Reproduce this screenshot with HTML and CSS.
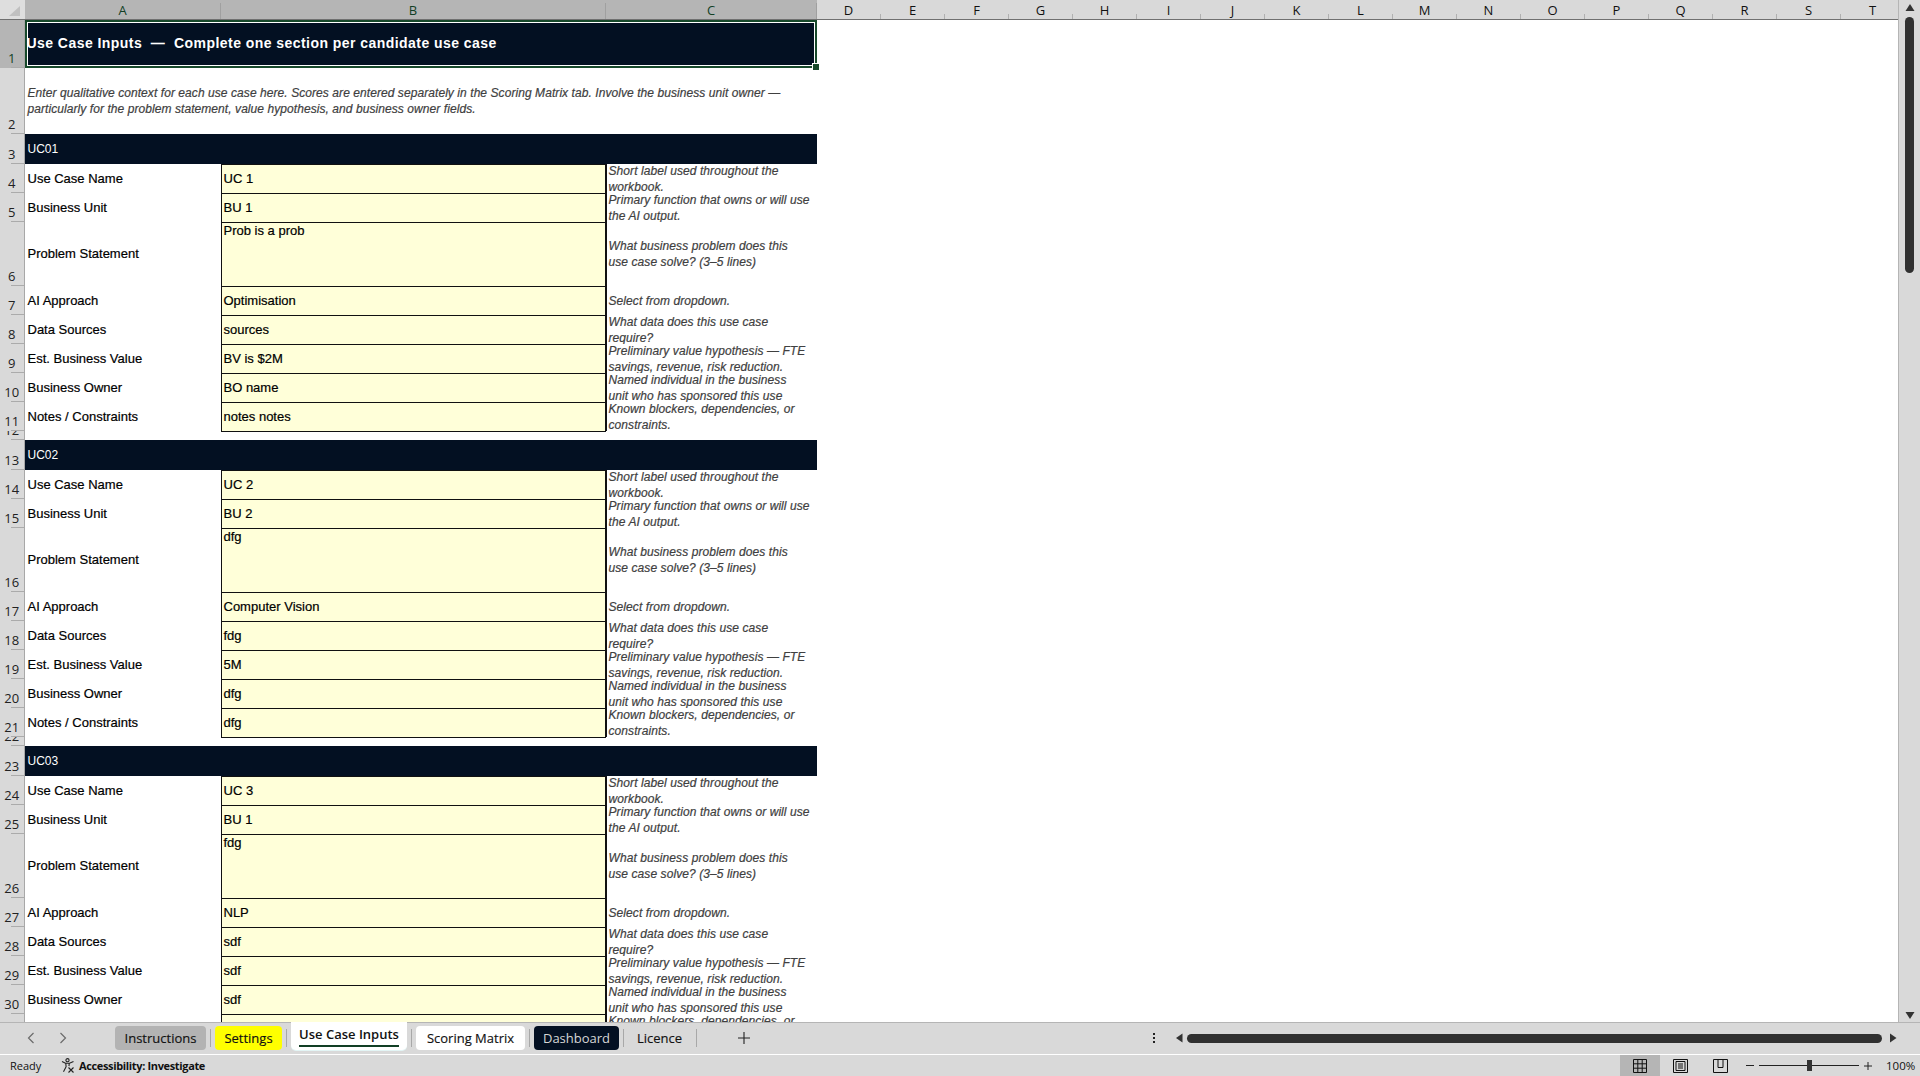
FILE: index.html
```html
<!DOCTYPE html>
<html lang="en">
<head>
    <meta charset="UTF-8">
    <title>Use Case Inputs</title>
    <link rel="stylesheet" href="styles.css">
</head>
<body>
<div class="app">

    <div class="workspace">
        <div class="sheet">
            <div class="col-heads">
                <div class="corner"><svg width="24" height="19" viewBox="0 0 24 19"><polygon points="20,6 20,16 9,16" fill="#c0c0c0"/></svg></div>
                <div class="col-head col-a sel">A</div>
                <div class="col-head col-b sel">B</div>
                <div class="col-head col-c sel">C</div>
                <div class="col-head">D</div>
                <div class="col-head">E</div>
                <div class="col-head">F</div>
                <div class="col-head">G</div>
                <div class="col-head">H</div>
                <div class="col-head">I</div>
                <div class="col-head">J</div>
                <div class="col-head">K</div>
                <div class="col-head">L</div>
                <div class="col-head">M</div>
                <div class="col-head">N</div>
                <div class="col-head">O</div>
                <div class="col-head">P</div>
                <div class="col-head">Q</div>
                <div class="col-head">R</div>
                <div class="col-head">S</div>
                <div class="col-head">T</div>
            </div>

            <div class="row row-title">
                <div class="row-head sel">1</div>
                <div class="merged title">Use Case Inputs &nbsp;—&nbsp; Complete one section per candidate use case<span class="fill-handle"></span></div>
            </div>
            <div class="row row-intro">
                <div class="row-head">2</div>
                <div class="merged intro">Enter qualitative context for each use case here. Scores are entered separately in the Scoring Matrix tab. Involve the business unit owner — particularly for the problem statement, value hypothesis, and business owner fields.</div>
            </div>

            <!-- UC01 -->
            <div class="row row-uc"><div class="row-head">3</div><div class="merged uc">UC01</div></div>
            <div class="row"><div class="row-head">4</div><div class="label">Use Case Name</div><div class="input">UC 1</div><div class="hint">Short label used throughout the workbook.</div></div>
            <div class="row"><div class="row-head">5</div><div class="label">Business Unit</div><div class="input">BU 1</div><div class="hint hint-wide">Primary function that owns or will use the AI output.</div></div>
            <div class="row row-tall"><div class="row-head">6</div><div class="label">Problem Statement</div><div class="input top">Prob is a prob</div><div class="hint">What business problem does this use case solve? (3–5 lines)</div></div>
            <div class="row"><div class="row-head">7</div><div class="label">AI Approach</div><div class="input">Optimisation</div><div class="hint">Select from dropdown.</div></div>
            <div class="row"><div class="row-head">8</div><div class="label">Data Sources</div><div class="input">sources</div><div class="hint">What data does this use case require?</div></div>
            <div class="row"><div class="row-head">9</div><div class="label">Est. Business Value</div><div class="input">BV is $2M</div><div class="hint">Preliminary value hypothesis — FTE savings, revenue, risk reduction.</div></div>
            <div class="row"><div class="row-head">10</div><div class="label">Business Owner</div><div class="input">BO name</div><div class="hint hint-long"><span>Named individual in the business unit who has sponsored this use case.</span></div></div>
            <div class="row"><div class="row-head">11</div><div class="label">Notes / Constraints</div><div class="input">notes notes</div><div class="hint">Known blockers, dependencies, or constraints.</div></div>
            <div class="row row-gap"><div class="row-head">12</div></div>

            <!-- UC02 -->
            <div class="row row-uc"><div class="row-head">13</div><div class="merged uc">UC02</div></div>
            <div class="row"><div class="row-head">14</div><div class="label">Use Case Name</div><div class="input">UC 2</div><div class="hint">Short label used throughout the workbook.</div></div>
            <div class="row"><div class="row-head">15</div><div class="label">Business Unit</div><div class="input">BU 2</div><div class="hint hint-wide">Primary function that owns or will use the AI output.</div></div>
            <div class="row row-tall"><div class="row-head">16</div><div class="label">Problem Statement</div><div class="input top">dfg</div><div class="hint">What business problem does this use case solve? (3–5 lines)</div></div>
            <div class="row"><div class="row-head">17</div><div class="label">AI Approach</div><div class="input">Computer Vision</div><div class="hint">Select from dropdown.</div></div>
            <div class="row"><div class="row-head">18</div><div class="label">Data Sources</div><div class="input">fdg</div><div class="hint">What data does this use case require?</div></div>
            <div class="row"><div class="row-head">19</div><div class="label">Est. Business Value</div><div class="input">5M</div><div class="hint">Preliminary value hypothesis — FTE savings, revenue, risk reduction.</div></div>
            <div class="row"><div class="row-head">20</div><div class="label">Business Owner</div><div class="input">dfg</div><div class="hint hint-long"><span>Named individual in the business unit who has sponsored this use case.</span></div></div>
            <div class="row"><div class="row-head">21</div><div class="label">Notes / Constraints</div><div class="input">dfg</div><div class="hint">Known blockers, dependencies, or constraints.</div></div>
            <div class="row row-gap"><div class="row-head">22</div></div>

            <!-- UC03 -->
            <div class="row row-uc"><div class="row-head">23</div><div class="merged uc">UC03</div></div>
            <div class="row"><div class="row-head">24</div><div class="label">Use Case Name</div><div class="input">UC 3</div><div class="hint">Short label used throughout the workbook.</div></div>
            <div class="row"><div class="row-head">25</div><div class="label">Business Unit</div><div class="input">BU 1</div><div class="hint hint-wide">Primary function that owns or will use the AI output.</div></div>
            <div class="row row-tall"><div class="row-head">26</div><div class="label">Problem Statement</div><div class="input top">fdg</div><div class="hint">What business problem does this use case solve? (3–5 lines)</div></div>
            <div class="row"><div class="row-head">27</div><div class="label">AI Approach</div><div class="input">NLP</div><div class="hint">Select from dropdown.</div></div>
            <div class="row"><div class="row-head">28</div><div class="label">Data Sources</div><div class="input">sdf</div><div class="hint">What data does this use case require?</div></div>
            <div class="row"><div class="row-head">29</div><div class="label">Est. Business Value</div><div class="input">sdf</div><div class="hint">Preliminary value hypothesis — FTE savings, revenue, risk reduction.</div></div>
            <div class="row"><div class="row-head">30</div><div class="label">Business Owner</div><div class="input">sdf</div><div class="hint hint-long"><span>Named individual in the business unit who has sponsored this use case.</span></div></div>
            <div class="row"><div class="row-head">31</div><div class="label">Notes / Constraints</div><div class="input">sdf</div><div class="hint">Known blockers, dependencies, or constraints.</div></div>
        </div>

        <div class="vscroll">
            <svg class="arrow" width="10" height="8" viewBox="0 0 10 8"><polygon points="5,0 9.5,7 0.5,7" fill="#333"/></svg>
            <div class="vthumb"></div>
            <svg class="arrow arrow-down" width="10" height="8" viewBox="0 0 10 8"><polygon points="0.5,1 9.5,1 5,8" fill="#333"/></svg>
        </div>
    </div>

    <div class="tabbar">
        <div class="tab-nav">
            <svg width="8" height="12" viewBox="0 0 8 12"><path d="M6.5 1 1.5 6l5 5" fill="none" stroke="#6b6b6b" stroke-width="1.2"/></svg>
            <svg width="8" height="12" viewBox="0 0 8 12"><path d="M1.5 1l5 5-5 5" fill="none" stroke="#6b6b6b" stroke-width="1.2"/></svg>
        </div>
        <div class="tabs">
            <div class="tab tab-grey">Instructions</div>
            <div class="tab-sep"></div>
            <div class="tab tab-yellow">Settings</div>
            <div class="tab-sep"></div>
            <div class="tab tab-active"><span>Use Case Inputs</span></div>
            <div class="tab-sep"></div>
            <div class="tab tab-white">Scoring Matrix</div>
            <div class="tab-sep"></div>
            <div class="tab tab-navy">Dashboard</div>
            <div class="tab-sep"></div>
            <div class="tab tab-plain">Licence</div>
            <div class="tab-sep"></div>
            <svg class="tab-add" width="12" height="12" viewBox="0 0 12 12"><path d="M6 0v12M0 6h12" stroke="#222" stroke-width="1.1"/></svg>
        </div>
        <div class="tab-dots"><i></i><i></i><i></i></div>
        <div class="hscroll">
            <svg width="8" height="10" viewBox="0 0 8 10"><polygon points="7.5,0.5 7.5,9.5 1,5" fill="#333"/></svg>
            <div class="hthumb"></div>
            <svg width="8" height="10" viewBox="0 0 8 10"><polygon points="1,0.5 7.5,5 1,9.5" fill="#333"/></svg>
        </div>
    </div>

    <div class="statusbar">
        <span class="ready">Ready</span>
        <svg class="a11y" width="14" height="15" viewBox="0 0 14 15" fill="none" stroke="#222" stroke-width="1.1">
            <circle cx="6.5" cy="2.2" r="1.6"/>
            <path d="M1 3.5l3.5 1.8h4L12.5 3.5M4.8 5.5l.3 3.2-2.6 5M8.2 5.5l-.2 2.6"/>
            <path d="M7.5 9.5l5 5M12.5 9.5l-5 5"/>
        </svg>
        <span class="a11y-text">Accessibility: Investigate</span>
        <div class="views">
            <div class="view view-on">
                <svg width="14" height="14" viewBox="0 0 14 14" fill="none" stroke="#111" stroke-width="1"><path d="M.5.5h13v13H.5zM.5 4.8h13M.5 9.2h13M4.8.5v13M9.2.5v13"/></svg>
            </div>
            <div class="view">
                <svg width="15" height="14" viewBox="0 0 15 14" fill="none" stroke="#111" stroke-width="1"><path d="M.5.5h14v13H.5zM3 2.5h9v9H3zM5 5h5M5 7h5M5 9h5"/></svg>
            </div>
            <div class="view">
                <svg width="15" height="14" viewBox="0 0 15 14" fill="none" stroke="#111" stroke-width="1"><path d="M.5.5h14v13H.5zM5 .5v8h5V.5"/></svg>
            </div>
        </div>
        <div class="zoom">
            <span class="zoom-minus"></span>
            <div class="slider"><span class="slider-knob"></span></div>
            <svg width="8" height="8" viewBox="0 0 8 8"><path d="M4 0v8M0 4h8" stroke="#222" stroke-width="1"/></svg>
            <span class="zoom-pct">100%</span>
        </div>
    </div>

</div>
</body>
</html>
```

FILE: styles.css
```css
* {
    box-sizing: border-box;
}

body {
    margin: 0;
    font-family: "Liberation Sans", Arial, sans-serif;
    background-color: #d9d9d9;
    overflow: hidden;
}

.app {
    display: flex;
    flex-direction: column;
    height: 100vh;
}

.workspace {
    display: flex;
    height: 1022px;
    flex: none;
}

.sheet {
    flex: 1;
    min-width: 0;
    overflow: hidden;
    background-color: white;
    border-right: 1px solid #b5b5b5;
}

/* column letters */
.col-heads {
    display: flex;
    height: 20px;
    background-color: #d9d9d9;
    border-bottom: 1px solid #707070;
    font-family: "Open Sans", sans-serif;
    font-size: 13px;
}

.corner {
    width: 24.5px;
    flex: none;
    background-color: #dedede;
}

.col-head {
    position: relative;
    width: 64px;
    flex: none;
    text-align: center;
    line-height: 20px;
    color: #111;
}

.col-head::after {
    content: "";
    position: absolute;
    right: 0;
    bottom: 0;
    height: 5px;
    width: 1px;
    background-color: #b0b0b0;
}

.col-head.sel {
    background-color: #b5b5b5;
    color: #123f25;
}

.col-head.sel::after {
    height: 16px;
    background-color: #a0a0a0;
}

.col-a { width: 196px; }
.col-b { width: 385px; }
.col-c { width: 211px; }

/* sheet rows */
.row {
    display: flex;
    height: 29px;
    font-size: 13px;
    color: black;
    -webkit-text-stroke: 0.2px;
}

.row-title { height: 47.5px; }
.row-intro { height: 66.5px; }
.row-uc { height: 29.5px; }
.row-tall { height: 64px; }
.row-gap { height: 9.7px; }

.row-head {
    position: relative;
    width: 24.5px;
    flex: none;
    display: flex;
    align-items: flex-end;
    justify-content: center;
    padding-bottom: 1px;
    background-color: #d9d9d9;
    border-right: 1px solid #a8a8a8;
    font-family: "Open Sans", sans-serif;
    font-size: 13px;
    line-height: 18px;
    color: #222;
    overflow: hidden;
    -webkit-text-stroke: 0;
}

.row-head::after {
    content: "";
    position: absolute;
    right: 0;
    bottom: 0;
    width: 13px;
    height: 1px;
    background-color: #ababab;
}

.row-head.sel {
    background-color: #b5b5b5;
    color: #123f25;
}

.merged {
    width: 792px;
    flex: none;
    padding-left: 3px;
    display: flex;
    align-items: center;
}

.title {
    position: relative;
    padding-bottom: 2px;
    padding-left: 0;
    background-color: #031022;
    color: white;
    font-size: 14px;
    font-weight: bold;
    letter-spacing: 0.45px;
    border: 2px solid #17492b;
    box-shadow: inset 0 0 0 1px white;
    -webkit-text-stroke: 0;
}

.fill-handle {
    position: absolute;
    right: -4px;
    bottom: -4px;
    width: 6px;
    height: 6px;
    margin: -1px;
    background-color: #17492b;
    border: 1px solid white;
    box-sizing: content-box;
}

.intro {
    font-size: 12px;
    font-style: italic;
    letter-spacing: 0.07px;
    line-height: 16px;
    color: #404040;
}

.uc {
    background-color: #031022;
    color: white;
    font-size: 12px;
    -webkit-text-stroke: 0;
}

.label {
    width: 196px;
    flex: none;
    padding-left: 3px;
    display: flex;
    align-items: center;
}

.input {
    position: relative;
    width: 385px;
    margin-bottom: -1px;
    flex: none;
    padding-left: 2px;
    display: flex;
    align-items: center;
    background-color: #ffffd9;
    border: 1px solid #111;
}

.input.top {
    align-items: flex-start;
}

.hint {
    width: 211px;
    flex: none;
    padding: 2px 9px 0 2px;
    display: flex;
    align-items: center;
    font-size: 12px;
    font-style: italic;
    letter-spacing: 0.08px;
    line-height: 16px;
    color: #404040;
    overflow: hidden;
    border-left: 1px solid #111;
}

.row-tall .hint {
    padding-top: 0;
}

.hint-wide {
    padding-right: 5px;
}

/* three lines in a two line row, only the first two show */
.hint-long {
    align-items: flex-start;
    padding-top: 0;
}

.hint-long span {
    margin-top: -1px;
}

/* scrollbars */
.vscroll {
    position: relative;
    width: 21px;
    flex: none;
    background-color: #d9d9d9;
}

.arrow {
    position: absolute;
    left: 6px;
    top: 4px;
}

.arrow-down {
    top: auto;
    bottom: 3px;
}

.vthumb {
    position: absolute;
    left: 6px;
    top: 17px;
    width: 9px;
    height: 256px;
    border-radius: 5px;
    background-color: #303030;
}

/* sheet tabs */
.tabbar {
    display: flex;
    align-items: flex-start;
    height: 32px;
    flex: none;
    background-color: #d9d9d9;
    border-top: 1px solid #b5b5b5;
    font-family: "Open Sans", sans-serif;
    font-size: 13px;
}

.tab-nav {
    width: 115px;
    flex: none;
    display: flex;
    gap: 24px;
    padding: 9px 0 0 27px;
}

.tabs {
    width: 1030px;
    flex: none;
    display: flex;
    align-items: flex-start;
}

.tab {
    height: 24px;
    margin-top: 3px;
    border-radius: 4px;
    display: flex;
    align-items: center;
    justify-content: center;
    color: #111;
    -webkit-text-stroke: 0.15px;
}

.tab-sep {
    width: 1px;
    height: 18px;
    margin: 6px 4px 0;
    background-color: #a8a8a8;
}

.tab-grey { width: 91px; background-color: #b3b3b3; }
.tab-yellow { width: 67px; background-color: #ffff00; }
.tab-white { width: 109px; background-color: white; }
.tab-navy { width: 85px; background-color: #031022; color: #d6d6d6; -webkit-text-stroke: 0; }

.tab-plain {
    width: 64px;
    padding-left: 9px;
    justify-content: flex-start;
}

.tab-active {
    width: 116px;
    height: 28px;
    margin-top: -1px;
    align-items: flex-start;
    background-color: white;
    border-radius: 0 0 5px 5px;
    font-weight: 600;
    box-shadow: 0 1px 0 #e3f5f5;
    -webkit-text-stroke: 0;
}

.tab-active span {
    margin-top: 2px;
    padding-bottom: 1px;
    border-bottom: 2px solid #123f25;
    line-height: 20px;
}

.tab-add {
    margin: 9px 0 0 37px;
}

.tab-dots {
    width: 24px;
    flex: none;
    display: flex;
    flex-direction: column;
    gap: 2px;
    padding: 10px 0 0 8px;
}

.tab-dots i {
    width: 2px;
    height: 2px;
    background-color: #222;
}

.hscroll {
    flex: 1;
    display: flex;
    align-items: center;
    padding: 10px 23px 0 6px;
}

.hthumb {
    flex: 1;
    height: 9px;
    margin: 0 7px 0 4px;
    border-radius: 5px;
    background-color: #303030;
}

/* status bar */
.statusbar {
    display: flex;
    align-items: center;
    flex: 1;
    border-top: 1px solid white;
    background-color: #d9d9d9;
    font-family: "Open Sans", sans-serif;
    font-size: 11px;
    color: #111;
}

.ready {
    width: 51px;
    padding-left: 10px;
    flex: none;
}

.a11y {
    margin: 0 4px 0 10px;
    flex: none;
}

.a11y-text {
    font-weight: 700;
    letter-spacing: -0.35px;
}

.views {
    display: flex;
    margin-left: auto;
    align-self: stretch;
}

.view {
    width: 40px;
    display: flex;
    align-items: center;
    justify-content: center;
}

.view-on {
    background-color: #b5b5b5;
}

.zoom {
    display: flex;
    align-items: center;
    width: 180px;
    padding-left: 6px;
    flex: none;
}

.zoom-minus {
    width: 8px;
    height: 1px;
    background-color: #222;
}

.slider {
    position: relative;
    width: 100px;
    height: 1px;
    margin: 0 5px;
    background-color: #222;
}

.slider-knob {
    position: absolute;
    left: 48px;
    top: -5px;
    width: 5px;
    height: 11px;
    background-color: #333;
}

.zoom-pct {
    margin-left: 14px;
    font-size: 11.5px;
}
```
